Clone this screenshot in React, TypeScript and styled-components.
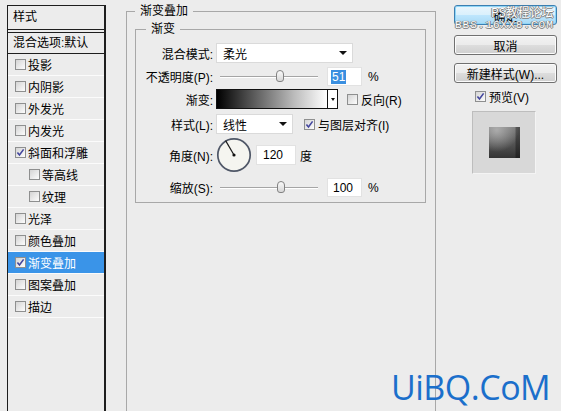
import React from "react";
import styled, { createGlobalStyle } from "styled-components";

const GlobalStyle = createGlobalStyle`
  html, body {
    margin: 0;
    padding: 0;
    background: #ececec;
  }
  body {
    font-family: "Liberation Sans", "Noto Sans CJK SC", sans-serif;
    font-size: 12px;
    color: #000;
  }
`;

const Dialog = styled.div`
  position: relative;
  width: 561px;
  height: 411px;
  overflow: hidden;
  display: flex;
  align-items: flex-start;
  background: #ececec;
`;

/* ---------- left style list ---------- */

const StylePanel = styled.div`
  margin: 5px 0 0 7px;
  width: 99px;
  height: 430px;
  box-sizing: border-box;
  border-left: 1px solid #1e1e1e;
  border-right: 2px solid #1e1e1e;
  border-top: 1px solid #1e1e1e;
  display: flex;
  flex-direction: column;
  flex: none;
`;

const PanelHead = styled.div`
  height: 23px;
  line-height: 23px;
  padding-left: 5px;
  border-bottom: 1px solid #1e1e1e;
`;

const BlendRow = styled.div`
  margin-top: 2px;
  height: 20px;
  line-height: 20px;
  padding-left: 5px;
  border-top: 1px solid #1e1e1e;
  border-bottom: 1px solid #1e1e1e;
`;

const Item = styled.div<{ $indent?: boolean; $active?: boolean }>`
  height: 21px;
  border-bottom: 1px solid #fbfbfb;
  display: flex;
  align-items: center;
  gap: 2px;
  padding-left: ${(p) => (p.$indent ? 21 : 7)}px;
  background: ${(p) => (p.$active ? "#3a94e8" : "transparent")};
  color: ${(p) => (p.$active ? "#fff" : "#000")};
`;

const Box = styled.span`
  width: 11px;
  height: 11px;
  box-sizing: border-box;
  border: 1px solid #8e8f8f;
  background: linear-gradient(135deg, #d4d4d4, #fdfdfd);
  display: inline-flex;
  align-items: center;
  justify-content: center;
  flex: none;
`;

function Check({ on }: { on?: boolean }) {
  return (
    <Box>
      {on && (
        <svg width="9" height="9" viewBox="0 0 9 9">
          <path d="M1.4 4.4 L3.5 7 L7.6 1.4" stroke="#44479e" strokeWidth="1.6" fill="none" />
        </svg>
      )}
    </Box>
  );
}

/* ---------- middle group boxes ---------- */

const Group = styled.fieldset`
  margin: 4px 0 0 20px;
  padding: 4px 9px 0 8px;
  width: 310px;
  height: 440px;
  box-sizing: border-box;
  border: 1px solid #a8a8a8;
  flex: none;
  min-width: 0;
`;

const Legend = styled.legend<{ $ml: number }>`
  margin-left: ${(p) => p.$ml}px;
  padding: 0 5px;
  line-height: 14px;
  font-size: 12px;
`;

const SubGroup = styled.fieldset`
  margin: 0;
  padding: 7px 0 5px 0;
  border: 1px solid #a8a8a8;
  min-width: 0;
`;

const Row = styled.div<{ $h: number; $mt: number }>`
  display: flex;
  align-items: center;
  height: ${(p) => p.$h}px;
  margin-top: ${(p) => p.$mt}px;
`;

const Label = styled.span`
  width: 77px;
  margin-right: 3px;
  text-align: right;
  white-space: nowrap;
  flex: none;
`;

const Select = styled.div<{ $w: number }>`
  width: ${(p) => p.$w}px;
  height: 20px;
  box-sizing: border-box;
  background: #fff;
  border: 1px solid #dadada;
  display: flex;
  align-items: center;
  justify-content: space-between;
  padding: 0 5px 0 6px;
`;

const Arrow = styled.span`
  width: 0;
  height: 0;
  border-left: 4px solid transparent;
  border-right: 4px solid transparent;
  border-top: 4px solid #111;
`;

const Slider = styled.div`
  position: relative;
  width: 98px;
  height: 19px;
  margin: 0 9px 0 4px;
  flex: none;
  &::before {
    content: "";
    position: absolute;
    left: 0;
    right: 0;
    top: 9px;
    height: 1px;
    background: #a5a5a5;
    box-shadow: 0 1px 0 #fff;
  }
`;

const Thumb = styled.span<{ $at: number }>`
  position: absolute;
  left: ${(p) => p.$at}px;
  top: 3px;
  width: 8px;
  height: 12px;
  box-sizing: border-box;
  border: 1px solid #828282;
  border-radius: 4px 4px 3px 3px;
  background: linear-gradient(#fafafa, #d6d6d6);
`;

const Field = styled.div<{ $w: number; $h?: number }>`
  width: ${(p) => p.$w}px;
  height: ${(p) => p.$h ?? 19}px;
  box-sizing: border-box;
  background: #fff;
  border: 1px solid #e2e2e2;
  padding-left: 3px;
  display: flex;
  align-items: center;
  flex: none;
`;

const Selected = styled.span`
  background: #3a8fe0;
  color: #fff;
  padding: 0 1px;
  line-height: 14px;
`;

const Unit = styled.span<{ $ml?: number }>`
  margin-left: ${(p) => p.$ml ?? 6}px;
`;

const GradientBar = styled.div`
  width: 122px;
  height: 20px;
  box-sizing: border-box;
  border: 1px solid #111;
  display: flex;
  flex: none;
`;

const GradientFill = styled.div`
  flex: 1;
  background: linear-gradient(to right, #000 0%, #444 25%, #bbb 70%, #fff 100%);
`;

const GradientDrop = styled.div`
  width: 9px;
  border-left: 1px solid #111;
  background: #fff;
  display: flex;
  align-items: center;
  justify-content: center;
`;

const SmallArrow = styled.span`
  width: 0;
  height: 0;
  border-left: 2px solid transparent;
  border-right: 2px solid transparent;
  border-top: 3px solid #111;
`;

const CheckLabel = styled.span<{ $ml: number }>`
  margin-left: ${(p) => p.$ml}px;
  display: flex;
  align-items: center;
  gap: 3px;
  white-space: nowrap;
`;

/* ---------- right column ---------- */

const Side = styled.div`
  margin: 5px 0 0 18px;
  width: 103px;
  display: flex;
  flex-direction: column;
  flex: none;
`;

const Btn = styled.div<{ $primary?: boolean; $mt: number }>`
  position: relative;
  margin-top: ${(p) => p.$mt}px;
  height: 20px;
  box-sizing: border-box;
  border: 1px solid ${(p) => (p.$primary ? "#3c7fb1" : "#707070")};
  border-radius: 3px;
  background: ${(p) =>
    p.$primary
      ? "linear-gradient(#eaf6fd 0%, #d9f0fc 50%, #bee6fd 51%, #a7d9f5 100%)"
      : "linear-gradient(#f2f2f2 0%, #ebebeb 50%, #dddddd 51%, #cfcfcf 100%)"};
  box-shadow: inset 0 0 0 1px ${(p) => (p.$primary ? "#8fd6f7" : "#fbfbfb")};
  display: flex;
  align-items: center;
  justify-content: center;
`;

const Mark = styled.span<{ $mono?: boolean }>`
  position: absolute;
  color: #fff;
  white-space: nowrap;
  text-shadow: 0 0 1px #555, 1px 0 0 #888, 0 1px 0 #888, -1px 0 0 #999;
  font-family: ${(p) => (p.$mono ? '"Liberation Mono", monospace' : '"Noto Sans CJK SC", sans-serif')};
  font-size: ${(p) => (p.$mono ? 11 : 12)}px;
  letter-spacing: ${(p) => (p.$mono ? 1 : 0)}px;
`;

const PreviewRow = styled.div`
  margin-top: 6px;
  height: 14px;
  padding-left: 21px;
  display: flex;
  align-items: center;
  gap: 3px;
`;

const PreviewBox = styled.div`
  margin: 8px 0 0 18px;
  width: 64px;
  height: 63px;
  box-sizing: border-box;
  background: #d8d8d8;
  border: 1px solid #f4f4f4;
  border-top-color: #bdbdbd;
  border-left-color: #bdbdbd;
  display: flex;
  align-items: center;
  justify-content: center;
`;

const PreviewSwatch = styled.div`
  width: 31px;
  height: 31px;
  background:
    radial-gradient(circle at 25% 10%, rgba(190, 190, 190, 0.75), rgba(190, 190, 190, 0) 60%),
    linear-gradient(to right, rgba(0, 0, 0, 0) 85%, rgba(0, 0, 0, 0.35) 86%),
    linear-gradient(#7a7a7a, #333);
`;

const SiteMark = styled.div`
  position: absolute;
  left: 391px;
  top: 364px;
  color: #1b6fcb;
  font-family: "Open Sans", "Liberation Sans", sans-serif;
  font-size: 34px;
  letter-spacing: -0.5px;
`;

function Dial() {
  return (
    <svg width="36" height="36" viewBox="0 0 36 36" style={{ flex: "none" }}>
      <circle cx="18" cy="18" r="16.2" fill="#f5f5f0" stroke="#4f5767" strokeWidth="1.7" />
      <line x1="18" y1="18" x2="9.6" y2="3.6" stroke="#1a1a1a" strokeWidth="1.2" />
      <circle cx="18" cy="18" r="1.6" fill="#111" />
    </svg>
  );
}

const items: { name: string; on?: boolean; indent?: boolean; active?: boolean }[] = [
  { name: "投影" },
  { name: "内阴影" },
  { name: "外发光" },
  { name: "内发光" },
  { name: "斜面和浮雕", on: true },
  { name: "等高线", indent: true },
  { name: "纹理", indent: true },
  { name: "光泽" },
  { name: "颜色叠加" },
  { name: "渐变叠加", on: true, active: true },
  { name: "图案叠加" },
  { name: "描边" },
];

export default function App() {
  return (
    <>
      <GlobalStyle />
      <Dialog>
        <StylePanel>
          <PanelHead>样式</PanelHead>
          <BlendRow>混合选项:默认</BlendRow>
          {items.map((it) => (
            <Item key={it.name} $indent={it.indent} $active={it.active}>
              <Check on={it.on} />
              {it.name}
            </Item>
          ))}
        </StylePanel>

        <Group>
          <Legend $ml={0}>渐变叠加</Legend>
          <SubGroup>
            <Legend $ml={10}>渐变</Legend>
            <Row $h={20} $mt={0}>
              <Label>混合模式:</Label>
              <Select $w={137}>
                柔光
                <Arrow />
              </Select>
            </Row>
            <Row $h={19} $mt={4}>
              <Label>不透明度(P):</Label>
              <Slider>
                <Thumb $at={56} />
              </Slider>
              <Field $w={35}>
                <Selected>51</Selected>
              </Field>
              <Unit>%</Unit>
            </Row>
            <Row $h={20} $mt={3}>
              <Label>渐变:</Label>
              <GradientBar>
                <GradientFill />
                <GradientDrop>
                  <SmallArrow />
                </GradientDrop>
              </GradientBar>
              <CheckLabel $ml={9}>
                <Check />
                反向(R)
              </CheckLabel>
            </Row>
            <Row $h={20} $mt={5}>
              <Label>样式(L):</Label>
              <Select $w={77}>
                线性
                <Arrow />
              </Select>
              <CheckLabel $ml={11}>
                <Check on />
                与图层对齐(I)
              </CheckLabel>
            </Row>
            <Row $h={36} $mt={3}>
              <Label>角度(N):</Label>
              <Dial />
              <Field $w={40} $h={20} style={{ marginLeft: 4, paddingLeft: 6 }}>
                120
              </Field>
              <Unit $ml={4}>度</Unit>
            </Row>
            <Row $h={19} $mt={5}>
              <Label>缩放(S):</Label>
              <Slider>
                <Thumb $at={57} />
              </Slider>
              <Field $w={35} style={{ paddingLeft: 5 }}>
                100
              </Field>
              <Unit>%</Unit>
            </Row>
          </SubGroup>
        </Group>

        <Side>
          <Btn $primary $mt={0}>
            确定
            <Mark style={{ left: 36, top: -3 }}>PS教程论坛</Mark>
            <Mark $mono style={{ left: 0, top: 13 }}>
              BBS.16XX8.COM
            </Mark>
          </Btn>
          <Btn $mt={10}>取消</Btn>
          <Btn $mt={8}>新建样式(W)...</Btn>
          <PreviewRow>
            <Check on />
            预览(V)
          </PreviewRow>
          <PreviewBox>
            <PreviewSwatch />
          </PreviewBox>
        </Side>

        <SiteMark>UiBQ.CoM</SiteMark>
      </Dialog>
    </>
  );
}
